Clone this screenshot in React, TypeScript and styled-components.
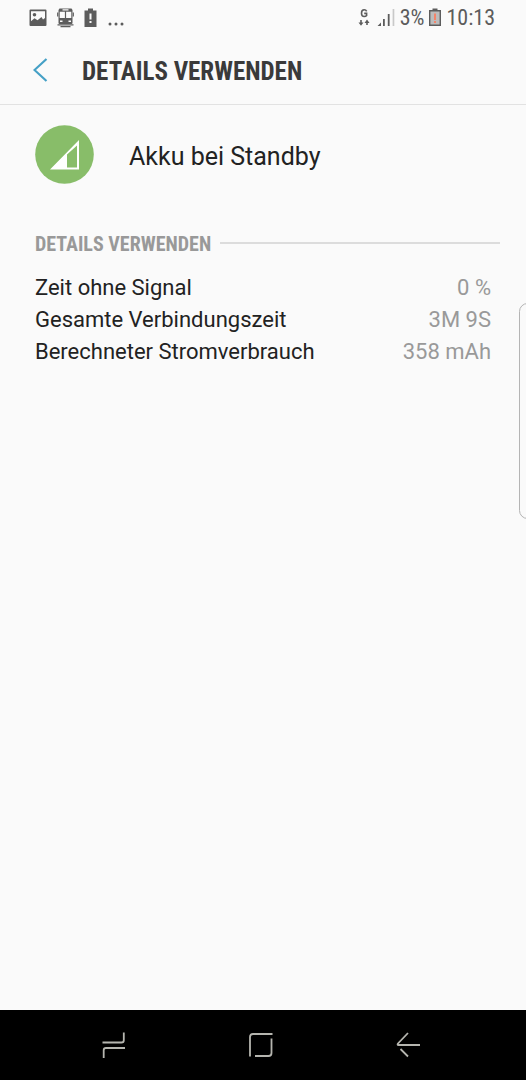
import React from "react";
import styled, { createGlobalStyle } from "styled-components";

const condensed = '"Roboto Condensed", "Liberation Sans Narrow", Roboto, sans-serif';

const GlobalStyle = createGlobalStyle`
  * { box-sizing: border-box; }
  body {
    margin: 0;
    background: #fafafa;
    color: #222;
    font-family: Roboto, "Liberation Sans", sans-serif;
  }
`;

const Screen = styled.div`
  position: relative;
  display: flex;
  flex-direction: column;
  min-height: 100vh;
  overflow: hidden;
`;

const StatusBar = styled.div`
  display: flex;
  align-items: center;
  justify-content: space-between;
  height: 36px;
  padding: 0 31px 0 29px;
  color: #5c5c5c;
  font-family: ${condensed};
  font-size: 22px;
  line-height: 36px;
`;

const StatusGroup = styled.div<{ $gap: number }>`
  display: flex;
  align-items: center;
  gap: ${(p) => p.$gap}px;
`;

const Header = styled.header`
  display: flex;
  align-items: center;
  gap: 24px;
  height: 69px;
  padding: 0 24px;
  border-bottom: 1px solid #e2e2e2;
`;

const IconButton = styled.button`
  display: flex;
  align-items: center;
  justify-content: center;
  width: 34px;
  height: 34px;
  padding: 0;
  border: 0;
  background: none;
  cursor: pointer;
`;

const PageTitle = styled.h1`
  margin: 0;
  padding-top: 4px;
  color: #3a3a3a;
  font-family: ${condensed};
  font-size: 25px;
  font-weight: 700;
  line-height: 32px;
  white-space: nowrap;
`;

const Main = styled.main`
  flex: 1;
  padding: 20px 26px 0 35px;
`;

const AppSummary = styled.div`
  display: flex;
  align-items: center;
  gap: 35px;
`;

const AppName = styled.div`
  padding-top: 4px;
  font-size: 25px;
  line-height: 32px;
`;

const SectionHeading = styled.div`
  display: flex;
  align-items: center;
  gap: 9px;
  margin-top: 48px;
  &::after {
    content: "";
    flex: 1;
    height: 2px;
    margin-bottom: 2px;
    background: #dcdcdc;
  }
`;

const SectionTitle = styled.h2`
  margin: 0;
  color: #999;
  font-family: ${condensed};
  font-size: 20px;
  font-weight: 700;
  line-height: 24px;
  white-space: nowrap;
`;

const DetailList = styled.dl`
  margin: 16px 9px 0 0;
`;

const DetailRow = styled.div`
  display: flex;
  justify-content: space-between;
  font-size: 22px;
  line-height: 32px;
`;

const DetailValue = styled.dd`
  margin: 0;
  color: #999;
`;

const EdgeHandle = styled.div`
  position: absolute;
  top: 303px;
  right: -10px;
  width: 17px;
  height: 216px;
  border: 1px solid #b4b4b4;
  border-radius: 9px;
`;

const NavBar = styled.nav`
  display: flex;
  align-items: center;
  justify-content: center;
  gap: 113px;
  height: 70px;
  padding-right: 4px;
  background: #000;
`;

const details = [
  { label: "Zeit ohne Signal", value: "0 %" },
  { label: "Gesamte Verbindungszeit", value: "3M 9S" },
  { label: "Berechneter Stromverbrauch", value: "358 mAh" },
];

const ImageIcon = () => (
  <svg width="18" height="18" viewBox="0 0 18 18">
    <path fillRule="evenodd" fill="#5c5c5c" d="M1.5 .5h15a1 1 0 0 1 1 1v14.500a1 1 0 0 1-1 1h-15a1 1 0 0 1-1-1V1.500a1 1 0 0 1 1-1zM2 2.300v10l3.500-3 3 2L12.500 8l1.500 2.500L16 9V2.300z" />
    <circle cx="5.500" cy="5.800" r="1.800" fill="#5c5c5c" />
  </svg>
);

const TransitIcon = () => (
  <svg width="17" height="20" viewBox="0 0 17 20">
    <path fillRule="evenodd" fill="#5c5c5c" d="M2.500 .5h12l1 1.500v13a1 1 0 0 1-1 1h-12a1 1 0 0 1-1-1V2zM5.500 1.300v1.200h6V1.300zM2.700 3.700V10h5.200V3.700zM9.100 3.700V10h5.200V3.700zM3 12.500v1.600h2.500v-1.600zM11.500 12.500v1.600h2.500v-1.600z" />
    <path stroke="#5c5c5c" strokeWidth="1.200" d="M.500 16.800h16M3.500 18.600h10M.700 4.500v4M16.300 4.500v4" />
  </svg>
);

const BatteryAlertIcon = () => (
  <svg width="13" height="20" viewBox="0 0 13 20">
    <path fill="#5c5c5c" d="M4 .500h5v2h3.500v16.500H.500V2.500H4z" />
    <path stroke="#fafafa" strokeWidth="2" d="M6.500 5.500v6M6.500 13v2" />
  </svg>
);

const MoreIcon = () => (
  <svg width="18" height="20" viewBox="0 0 18 20" fill="#5c5c5c">
    <circle cx="3" cy="16" r="1.500" />
    <circle cx="9" cy="16" r="1.500" />
    <circle cx="15" cy="16" r="1.500" />
  </svg>
);

const DataIcon = () => (
  <svg width="14" height="20" viewBox="0 0 14 20" fill="none" stroke="#5c5c5c">
    <path strokeWidth="1.600" d="M8.700 3.300C8 2 7.200 1.800 6.200 1.800 4.300 1.800 3.500 3.100 3.500 5.200S4.400 8.500 6.200 8.500c1.200 0 2-.4 2.400-.9V5.400H6.200" />
    <path strokeWidth="1.600" d="M3 12v4M9 17v-4" />
    <path fill="#5c5c5c" stroke="none" d="M.500 14.500h5L3 17.800zM6.500 15h5L9 11.500z" />
  </svg>
);

const SignalIcon = () => (
  <svg width="18" height="18" viewBox="0 0 18 18">
    <path fill="#5c5c5c" d="M.500 17 4 13.500V17zM6 10h1.800v7H6zM10.800 5h1.800v12h-1.800z" />
    <path fill="#c9c9c9" d="M15.600 0h1.700v17h-1.700z" />
  </svg>
);

const BatteryLowIcon = () => (
  <svg width="12" height="20" viewBox="0 0 12 20">
    <path fill="#bcbcbc" stroke="#5c5c5c" strokeWidth="1.400" d="M.700 2.700h10.600v14.600H.700z" />
    <path fill="#5c5c5c" d="M3.500 .5h5v2.500h-5z" />
    <path stroke="#f5846a" strokeWidth="2" d="M6 5.500v6.500M6 13v2" />
  </svg>
);

const ChevronLeft = () => (
  <svg width="16" height="26" viewBox="0 0 16 26" fill="none" stroke="#45a0c6" strokeWidth="2.200">
    <path d="M13.500 2 1.500 13l12 11" />
  </svg>
);

const StandbyIcon = () => (
  <svg width="59" height="59" viewBox="0 0 59 59">
    <circle cx="29.500" cy="29.500" r="29.300" fill="#88bd69" />
    <path fill="#fff" fillRule="evenodd" d="M15 44.500 44 15v29.500zM32 29.500V42.500h10V20.500z" />
  </svg>
);

const navStroke = { fill: "none", stroke: "#b5b5af", strokeWidth: 1.8 };

const RecentsIcon = () => (
  <svg width="24" height="28" viewBox="0 0 24 28" {...navStroke}>
    <path d="M.500 11.500h19q2.300 0 2.300-2.300V1.500M23 17H4q-2.300 0-2.300 2.300V27" />
  </svg>
);

const HomeIcon = () => (
  <svg width="26" height="26" viewBox="0 0 26 26" {...navStroke}>
    <path d="M2 24.500V5q0-3 3-3h19.500M23.500 6.500V21q0 3-3 3H7" />
  </svg>
);

const BackIcon = () => (
  <svg width="24" height="26" viewBox="0 0 24 26" {...navStroke}>
    <path d="M12 1 2 11.500Q1 13 2.500 13H24M4.500 17 12 24.500" />
  </svg>
);

export default function App() {
  return (
    <Screen>
      <GlobalStyle />
      <StatusBar>
        <StatusGroup $gap={10}>
          <ImageIcon />
          <TransitIcon />
          <BatteryAlertIcon />
          <MoreIcon />
        </StatusGroup>
        <StatusGroup $gap={5}>
          <DataIcon />
          <SignalIcon />
          <span>3%</span>
          <BatteryLowIcon />
          <span>10:13</span>
        </StatusGroup>
      </StatusBar>
      <Header>
        <IconButton type="button" aria-label="Zurück">
          <ChevronLeft />
        </IconButton>
        <PageTitle>DETAILS VERWENDEN</PageTitle>
      </Header>
      <Main>
        <AppSummary>
          <StandbyIcon />
          <AppName>Akku bei Standby</AppName>
        </AppSummary>
        <SectionHeading>
          <SectionTitle>DETAILS VERWENDEN</SectionTitle>
        </SectionHeading>
        <DetailList>
          {details.map((d) => (
            <DetailRow key={d.label}>
              <dt>{d.label}</dt>
              <DetailValue>{d.value}</DetailValue>
            </DetailRow>
          ))}
        </DetailList>
      </Main>
      <EdgeHandle />
      <NavBar>
        <IconButton type="button" aria-label="Letzte Apps">
          <RecentsIcon />
        </IconButton>
        <IconButton type="button" aria-label="Startseite">
          <HomeIcon />
        </IconButton>
        <IconButton type="button" aria-label="Zurück">
          <BackIcon />
        </IconButton>
      </NavBar>
    </Screen>
  );
}
